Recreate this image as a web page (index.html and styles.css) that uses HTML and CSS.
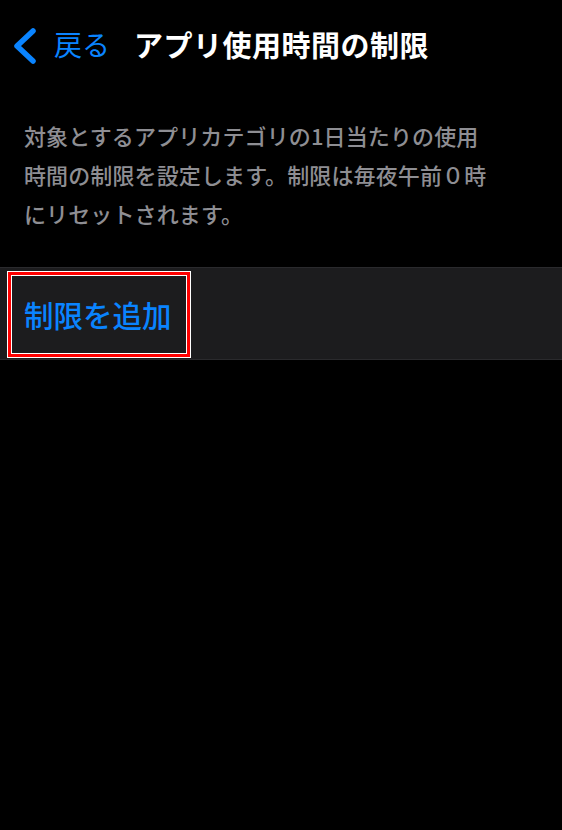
FILE: index.html
```html
<!DOCTYPE html>
<html lang="ja">
<head>
<meta charset="utf-8">
<title>アプリ使用時間の制限</title>
<link rel="stylesheet" href="styles.css">
</head>
<body>
<div class="screen">
  <header class="nav">
    <svg class="chevron" width="30" height="40" viewBox="0 0 30 40" aria-hidden="true">
      <polyline points="23,7 7,22 23,37" fill="none" stroke="#0a84ff" stroke-width="5.5" stroke-linecap="round" stroke-linejoin="round"/>
    </svg>
    <span class="back">戻る</span>
    <h1 class="title">アプリ使用時間の制限</h1>
  </header>
  <p class="desc">対象とするアプリカテゴリの1日当たりの使用時間の制限を設定します。制限は毎夜午前０時にリセットされます。</p>
  <div class="row">
    <div class="add">制限を追加</div>
  </div>
</div>
</body>
</html>
```
FILE: styles.css
```css
html, body {
  margin: 0;
  padding: 0;
  background: #000;
}
body {
  font-family: "Noto Sans CJK JP", "Noto Sans", sans-serif;
  color: #fff;
}
.screen {
  width: 562px;
  min-height: 830px;
  background: #000;
}
.nav {
  height: 88px;
  display: flex;
  align-items: center;
  padding-left: 10px;
}
.chevron {
  display: block;
  flex: none;
}
.back {
  margin-left: 14px;
  font-size: 28px;
  line-height: 1;
  color: #0a84ff;
  font-weight: 400;
}
.title {
  margin: 0 0 0 24px;
  font-size: 29px;
  letter-spacing: 0.5px;
  line-height: 1;
  font-weight: 700;
  color: #fff;
}
.desc {
  margin: 28px 0 0 0;
  padding: 0 70px 0 24px;
  font-size: 22px;
  letter-spacing: 0.12px;
  line-height: 39px;
  font-weight: 500;
  color: #8e8e93;
}
.row {
  margin-top: 34px;
  background: #1c1c1e;
  border-top: 1px solid #2a2a2d;
  border-bottom: 1px solid #2a2a2d;
  height: 91px;
  box-sizing: content-box;
  display: flex;
  align-items: stretch;
  padding: 0 0 0 8px;
}
.add {
  margin: 4px 0 2px 0;
  display: flex;
  align-items: center;
  padding: 0 15px 0 13px;
  border: 3px solid #ff0000;
  box-shadow: 0 0 0 1px #fff, inset 0 0 0 1px #fff;
  font-size: 29.5px;
  line-height: 1;
  font-weight: 500;
  color: #0a84ff;
}
```
